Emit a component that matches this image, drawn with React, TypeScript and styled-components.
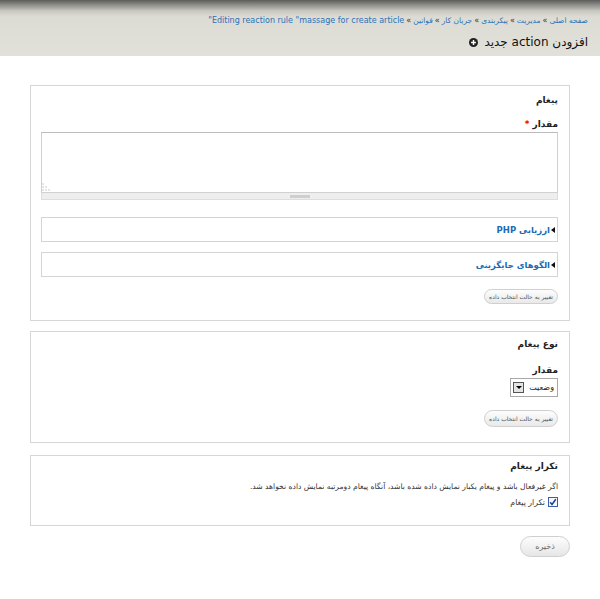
import React from "react";
import styled, { createGlobalStyle } from "styled-components";

const GlobalStyle = createGlobalStyle`
  html, body { margin: 0; padding: 0; background: #fff; }
  body {
    font-family: "DejaVu Sans", "Noto Sans", sans-serif;
    font-size: 9px;
    color: #222;
    direction: rtl;
  }
`;

const Header = styled.header`
  height: 56px;
  box-sizing: border-box;
  padding: 15px 12px 0;
  background: linear-gradient(to bottom, #5c5c5a 0px, #8e8e8a 5px, #c9c9c2 11px, #dcdcd5 17px, #e1e1da 100%);
`;

const Breadcrumb = styled.div`
  font-size: 8px;
  line-height: 12px;
  color: #2b72b8;
  white-space: nowrap;
`;

const Crumb = styled.span`
  font-size: 7.5px;
`;

const Sep = styled.span`
  color: #333;
  margin: 0 2px;
`;

const Title = styled.h1`
  margin: 6px 0 0;
  font-size: 12px;
  font-weight: normal;
  line-height: 18px;
  color: #111;
  display: flex;
  align-items: center;
  gap: 6px;
`;

const Main = styled.main`
  padding: 29px 30px 0;
`;

const Panel = styled.section<{ $top?: number; $bottom?: number }>`
  border: 1px solid #d6d6d6;
  padding: ${(p) => p.$top ?? 8}px 11px ${(p) => p.$bottom ?? 16}px 10px;
  margin-bottom: 10px;
`;

const Legend = styled.div`
  font-weight: bold;
  font-size: 9px;
  line-height: 12px;
  color: #222;
`;

const Label = styled.div<{ $gap?: number }>`
  margin-top: ${(p) => p.$gap ?? 12}px;
  font-weight: bold;
  font-size: 9px;
  line-height: 12px;
`;

const Star = styled.span`
  color: #e00;
  margin-right: 3px;
`;

const TextArea = styled.div`
  margin-top: 2px;
  height: 61px;
  box-sizing: border-box;
  border: 1px solid #d0d0d0;
  border-top-color: #bcbcbc;
  background: #fff;
  display: flex;
  align-items: flex-end;
  justify-content: flex-end;
  padding: 0 1px 1px 0;
`;

const Grippie = styled.div`
  height: 7px;
  box-sizing: border-box;
  border: 1px solid #ddd;
  border-top: none;
  background: #eee;
  display: flex;
  align-items: center;
  justify-content: center;
`;

const GripHandle = styled.div`
  width: 20px;
  height: 3px;
  background: #cfcfcf;
`;

const Collapsed = styled.div<{ $gap: number }>`
  margin-top: ${(p) => p.$gap}px;
  height: 25px;
  box-sizing: border-box;
  border: 1px solid #d4d4d4;
  padding-right: 2px;
  display: flex;
  align-items: center;
  gap: 1px;
`;

const Arrow = styled.span`
  width: 0;
  height: 0;
  border-top: 3px solid transparent;
  border-bottom: 3px solid transparent;
  border-right: 4px solid #111;
`;

const CollapsedTitle = styled.span`
  color: #1b6cb5;
  font-weight: bold;
  font-size: 8.5px;
`;

const PillButton = styled.button<{ $gap?: number; $h?: number }>`
  display: block;
  margin-top: ${(p) => p.$gap ?? 12}px;
  height: ${(p) => p.$h ?? 15}px;
  padding: 0 4px;
  border: 1px solid #cfcfcf;
  border-radius: 9px;
  background: linear-gradient(to bottom, #fdfdfd, #e9e9e9);
  font-family: "DejaVu Sans", sans-serif;
  font-size: 6px;
  color: #555;
  line-height: 1;
`;

const SelectBox = styled.div`
  margin-top: 2px;
  width: 48px;
  height: 19px;
  box-sizing: border-box;
  border: 1px solid #a8a8a8;
  background: #fff;
  display: flex;
  align-items: center;
  justify-content: space-between;
  padding: 0 3px 0 2px;
  font-size: 8px;
`;

const SelectBtn = styled.span`
  width: 11px;
  height: 11px;
  box-sizing: border-box;
  border: 1px solid #555;
  background: #e4e4e4;
  display: flex;
  align-items: center;
  justify-content: center;
`;

const Down = styled.span`
  width: 0;
  height: 0;
  border-left: 3px solid transparent;
  border-right: 3px solid transparent;
  border-top: 3px solid #000;
`;

const Description = styled.p`
  margin: 9px 0 0;
  font-size: 7.6px;
  line-height: 12px;
  color: #333;
`;

const CheckRow = styled.label`
  margin-top: 4px;
  display: flex;
  align-items: center;
  gap: 3px;
  font-size: 7.8px;
  color: #333;
`;

const CheckBox = styled.span`
  width: 10px;
  height: 10px;
  box-sizing: border-box;
  border: 1px solid #3b5ea8;
  background: #f4f6fb;
  display: flex;
  align-items: center;
  justify-content: center;
`;

const Actions = styled.div`
  margin-top: 2px;
`;

const SaveButton = styled.button`
  width: 50px;
  height: 21px;
  border: 1px solid #cfcfcf;
  border-radius: 11px;
  background: linear-gradient(to bottom, #fdfdfd, #e6e6e6);
  font-family: "DejaVu Sans", sans-serif;
  font-size: 8px;
  color: #666;
`;

const PlusIcon = () => (
  <svg width="9" height="9" viewBox="0 0 10 10">
    <circle cx="5" cy="5" r="5" fill="#222" />
    <path d="M5 2.3v5.4M2.3 5h5.4" stroke="#fff" strokeWidth="1.6" />
  </svg>
);

const Check = () => (
  <svg width="8" height="8" viewBox="0 0 8 8">
    <path d="M1.2 4.2 L3 6.4 L6.8 1.2" stroke="#1f3f8f" strokeWidth="1.5" fill="none" />
  </svg>
);

const ResizeDots = () => (
  <svg width="8" height="8" viewBox="0 0 8 8">
    {[
      [1, 1],
      [1, 4],
      [4, 4],
      [1, 7],
      [4, 7],
      [7, 7],
    ].map(([x, y]) => (
      <rect key={`${x}-${y}`} x={x - 0.5} y={y - 0.5} width="1" height="1" fill="#999" />
    ))}
  </svg>
);

const crumbs = ["صفحه اصلی", "مدیریت", "پیکربندی", "جریان کار", "قوانین"];

export default function App() {
  return (
    <>
      <GlobalStyle />
      <Header>
        <Breadcrumb>
          {crumbs.map((c) => (
            <React.Fragment key={c}>
              <Crumb>{c}</Crumb>
              <Sep>»</Sep>
            </React.Fragment>
          ))}
          Editing reaction rule "massage for create article"
        </Breadcrumb>
        <Title>
          افزودن action جدید
          <PlusIcon />
        </Title>
      </Header>
      <Main>
        <Panel $top={8} $bottom={16}>
          <Legend>پیغام</Legend>
          <Label>
            مقدار<Star>*</Star>
          </Label>
          <TextArea>
            <ResizeDots />
          </TextArea>
          <Grippie>
            <GripHandle />
          </Grippie>
          <Collapsed $gap={17}>
            <Arrow />
            <CollapsedTitle>ارزیابی PHP</CollapsedTitle>
          </Collapsed>
          <Collapsed $gap={10}>
            <Arrow />
            <CollapsedTitle>الگوهای جایگزینی</CollapsedTitle>
          </Collapsed>
          <PillButton $gap={12}>تغییر به حالت انتخاب داده</PillButton>
        </Panel>
        <Panel $top={6} $bottom={15}>
          <Legend>نوع پیغام</Legend>
          <Label $gap={14}>مقدار</Label>
          <SelectBox>
            وضعیت
            <SelectBtn>
              <Down />
            </SelectBtn>
          </SelectBox>
          <PillButton $gap={13} $h={17}>تغییر به حالت انتخاب داده</PillButton>
        </Panel>
        <Panel $top={4} $bottom={18} style={{ marginTop: 12 }}>
          <Legend>تکرار پیغام</Legend>
          <Description>
            اگر غیرفعال باشد و پیغام یکبار نمایش داده شده باشد، آنگاه پیغام دومرتبه نمایش داده نخواهد شد.
          </Description>
          <CheckRow>
            <CheckBox>
              <Check />
            </CheckBox>
            تکرار پیغام
          </CheckRow>
        </Panel>
        <Actions>
          <SaveButton>ذخیره</SaveButton>
        </Actions>
      </Main>
    </>
  );
}
